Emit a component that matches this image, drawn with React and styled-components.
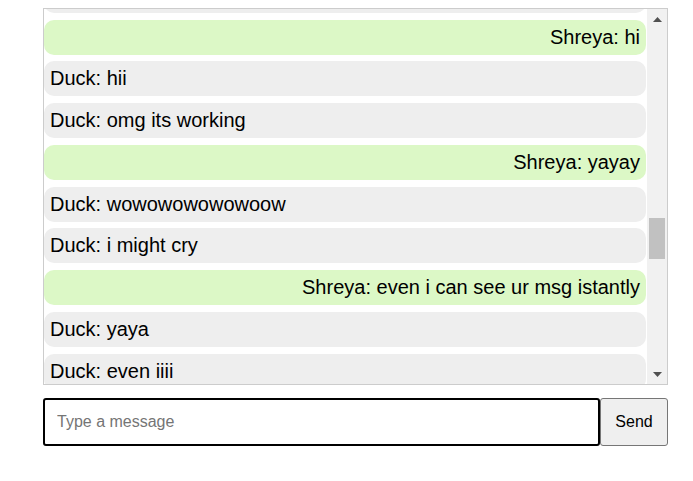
import React, { useLayoutEffect, useRef, useState } from "react";
import styled, { createGlobalStyle } from "styled-components";

const Global = createGlobalStyle`
  html, body { margin: 0; padding: 0; background: #fff; }
  body { font-family: "Liberation Sans", Arial, sans-serif; }
`;

const Page = styled.div`
  padding: 8px 0 0 43px;
  width: 625px;
`;

const ChatFrame = styled.div`
  display: flex;
  box-sizing: border-box;
  height: 377px;
  border: 1px solid #ccc;
`;

const MessageList = styled.div`
  flex: 1;
  min-width: 0;
  overflow-y: auto;
  scrollbar-width: none;
  &::-webkit-scrollbar { display: none; }
`;

const ScrollRail = styled.div`
  width: 20px;
  flex: none;
  display: flex;
  flex-direction: column;
  background: #f1f1f1;
`;

const ArrowButton = styled.div`
  height: 20px;
  flex: none;
  display: flex;
  align-items: center;
  justify-content: center;
`;

const Track = styled.div`
  flex: 1;
  position: relative;
`;

const Thumb = styled.div`
  position: absolute;
  left: 2px;
  right: 2px;
  background: #c1c1c1;
`;

const Message = styled.div`
  margin: 0 1px 6.75px 0;
  padding: 6px;
  border-radius: 10px;
  font-size: 20px;
  line-height: 23px;
  color: #000;
  background: ${(p) => (p.$mine ? "#dcf8c6" : "#eee")};
  text-align: ${(p) => (p.$mine ? "right" : "left")};
`;

const InputRow = styled.form`
  display: flex;
  margin-top: 13px;
`;

const TextInput = styled.input`
  flex: 1;
  box-sizing: border-box;
  height: 48px;
  padding: 0 12px;
  border: 2px solid #000;
  border-radius: 3px;
  font-family: "Liberation Sans", Arial, sans-serif;
  font-size: 16px;
  outline: none;
  &::placeholder { color: #757575; }
`;

const SendButton = styled.button`
  box-sizing: border-box;
  width: 68px;
  height: 48px;
  border: 1px solid #767676;
  border-radius: 3px;
  background: #efefef;
  font-family: "Liberation Sans", Arial, sans-serif;
  font-size: 16px;
  color: #000;
`;

const before = [
  ["Shreya", "hello?"], ["Duck", "hey"], ["Shreya", "testing testing"], ["Duck", "can u see this"],
  ["Shreya", "nope"], ["Duck", "wait"], ["Shreya", "refresh"], ["Duck", "ok"],
  ["Shreya", "anything?"], ["Duck", "nothing"], ["Shreya", "hmm"], ["Duck", "try again"],
  ["Shreya", "hello"], ["Duck", "still no"], ["Shreya", "ugh"], ["Duck", "one sec"],
  ["Shreya", "ok"], ["Duck", "fixed the socket"], ["Shreya", "lets see"], ["Duck", "test"],
  ["Shreya", "test"], ["Duck", "hmmm"], ["Shreya", "wait"], ["Duck", "ok"],
  ["Shreya", "now?"], ["Duck", "no"], ["Shreya", "restarting server"], ["Duck", "ok"],
  ["Shreya", "hello"], ["Duck", "hello"], ["Shreya", "did it come"], ["Duck", "after refresh yes"],
  ["Shreya", "not live?"], ["Duck", "nope"], ["Shreya", "one more try"], ["Duck", "sure"],
  ["Shreya", "ok pushed"], ["Duck", "pulling"], ["Shreya", "done?"], ["Duck", "yes"],
  ["Shreya", "ok send smth"], ["Duck", "hello"],
];

const visible = [
  ["Shreya", "hi"], ["Duck", "hii"], ["Duck", "omg its working"], ["Shreya", "yayay"],
  ["Duck", "wowowowowowoow"], ["Duck", "i might cry"], ["Shreya", "even i can see ur msg istantly"],
  ["Duck", "yaya"], ["Duck", "even iiii"],
];

const after = [
  ["Shreya", "finallyyy"], ["Duck", "took us forever"], ["Shreya", "lol"], ["Duck", "ok what next"],
  ["Shreya", "usernames?"], ["Duck", "already there"], ["Shreya", "oh right"], ["Duck", "timestamps"],
  ["Shreya", "ok"], ["Duck", "and styling"], ["Shreya", "its fine"], ["Duck", "its ugly"],
  ["Shreya", "rude"], ["Duck", "haha"], ["Shreya", "ok tmrw"], ["Duck", "yes"],
  ["Shreya", "sleep now"], ["Duck", "gn"], ["Shreya", "gn"], ["Duck", "bye"],
  ["Shreya", "bye"], ["Duck", "wait one more"], ["Shreya", "test"],
];

const Arrow = ({ down }) => (
  <svg width="9" height="5" viewBox="0 0 9 5">
    <polygon points={down ? "0,0 9,0 4.5,5" : "0,5 9,5 4.5,0"} fill="#505050" />
  </svg>
);

export default function App() {
  const listRef = useRef(null);
  const targetRef = useRef(null);
  const trackRef = useRef(null);
  const [thumb, setThumb] = useState({ top: 190, height: 41 });

  const updateThumb = () => {
    const list = listRef.current;
    const track = trackRef.current;
    if (!list || !track) return;
    const trackH = track.clientHeight;
    const h = Math.max(20, (trackH * list.clientHeight) / list.scrollHeight);
    const max = list.scrollHeight - list.clientHeight;
    const top = max > 0 ? ((trackH - h) * list.scrollTop) / max : 0;
    setThumb({ top, height: h });
  };

  useLayoutEffect(() => {
    if (listRef.current && targetRef.current) {
      listRef.current.scrollTop =
        targetRef.current.offsetTop - listRef.current.offsetTop - 11;
    }
    updateThumb();
  }, []);

  const render = (list, prefix, markFirst) =>
    list.map(([who, text], i) => (
      <Message
        key={prefix + i}
        $mine={who === "Shreya"}
        ref={markFirst && i === 0 ? targetRef : undefined}
      >
        {who}: {text}
      </Message>
    ));

  return (
    <>
      <Global />
      <Page>
        <ChatFrame>
          <MessageList ref={listRef} onScroll={updateThumb}>
            {render(before, "b", false)}
            {render(visible, "v", true)}
            {render(after, "a", false)}
          </MessageList>
          <ScrollRail>
            <ArrowButton>
              <Arrow />
            </ArrowButton>
            <Track ref={trackRef}>
              <Thumb style={{ top: thumb.top, height: thumb.height }} />
            </Track>
            <ArrowButton>
              <Arrow down />
            </ArrowButton>
          </ScrollRail>
        </ChatFrame>
        <InputRow onSubmit={(e) => e.preventDefault()}>
          <TextInput placeholder="Type a message" />
          <SendButton type="submit">Send</SendButton>
        </InputRow>
      </Page>
    </>
  );
}
